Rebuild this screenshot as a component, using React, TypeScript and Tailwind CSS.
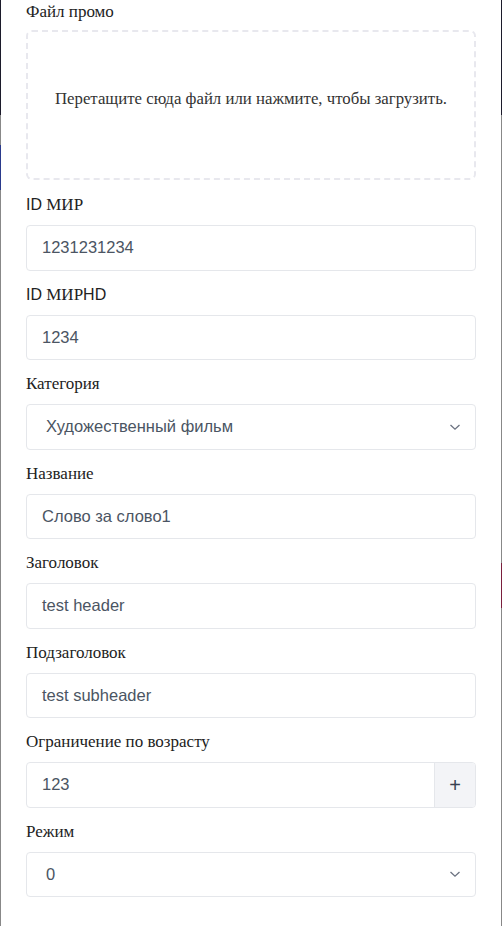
import React from 'react';

const serif = { fontFamily: '"Liberation Serif", "Times New Roman", serif' };

const Label: React.FC<{ children: React.ReactNode }> = ({ children }) => (
  <div className="text-[17px] leading-6 text-[#222222] mb-2" style={serif}>
    {children}
  </div>
);

const Latin: React.FC<{ text: string }> = ({ text }) => (
  <span className="font-['Liberation_Sans',Arial,sans-serif] text-[16px]">{text}</span>
);

const TextInput: React.FC<{ value: string }> = ({ value }) => (
  <div className="h-[45.5px] border border-[#e5e7eb] rounded-[4px] flex items-center px-[15px] text-[16.5px] text-[#4b5563] font-['Liberation_Sans',Arial,sans-serif]">
    {value}
  </div>
);

const Chevron = () => (
  <svg width="12" height="8" viewBox="0 0 12 8" fill="none" stroke="#6b7280" strokeWidth="1.3">
    <path d="M1.5 2 L6 6.2 L10.5 2" />
  </svg>
);

const SelectInput: React.FC<{ value: string }> = ({ value }) => (
  <div className="h-[45.5px] border border-[#e5e7eb] rounded-[4px] flex items-center justify-between pl-[19px] pr-[14px] text-[16.5px] text-[#4b5563] font-['Liberation_Sans',Arial,sans-serif]">
    <span>{value}</span>
    <Chevron />
  </div>
);

export default function App() {
  return (
    <div className="w-[502px] h-[926px] flex bg-[#888888] overflow-hidden">
      <div className="w-px flex flex-col">
        <div className="h-[115px] bg-[#1c1b2b]" />
        <div className="h-[30px] bg-[#888888]" />
        <div className="h-[45px] bg-[#2a3a8c]" />
      </div>
      <div className="w-[500px] bg-white px-[25px] flex flex-col">
        <div className="text-[17px] leading-6 text-[#222222] mb-[6px]" style={serif}>
          Файл промо
        </div>
        <div className="h-[150px] border-2 border-dashed border-[#e8e8ee] rounded-[6px] flex items-center justify-center pb-[12px]">
          <span className="text-[16.8px] text-[#333333]" style={serif}>
            Перетащите сюда файл или нажмите, чтобы загрузить.
          </span>
        </div>
        <div className="mt-[13px]">
          <Label>
            <Latin text="ID" /> МИР
          </Label>
          <TextInput value="1231231234" />
        </div>
        <div className="mt-[12px]">
          <Label>
            <Latin text="ID" /> МИР<Latin text="HD" />
          </Label>
          <TextInput value="1234" />
        </div>
        <div className="mt-[12px]">
          <Label>Категория</Label>
          <SelectInput value="Художественный фильм" />
        </div>
        <div className="mt-[12px]">
          <Label>Название</Label>
          <TextInput value="Слово за слово1" />
        </div>
        <div className="mt-[12px]">
          <Label>Заголовок</Label>
          <TextInput value="test header" />
        </div>
        <div className="mt-[12px]">
          <Label>Подзаголовок</Label>
          <TextInput value="test subheader" />
        </div>
        <div className="mt-[12px]">
          <Label>Ограничение по возрасту</Label>
          <div className="h-[45.5px] border border-[#e5e7eb] rounded-[4px] flex text-[16.5px] text-[#4b5563] font-['Liberation_Sans',Arial,sans-serif] overflow-hidden">
            <div className="flex-1 flex items-center px-[15px]">123</div>
            <div className="w-[41px] border-l border-[#e5e7eb] bg-[#f3f4f7] flex items-center justify-center text-[20px] text-[#374151]">
              +
            </div>
          </div>
        </div>
        <div className="mt-[12px]">
          <Label>Режим</Label>
          <SelectInput value="0" />
        </div>
      </div>
      <div className="w-px flex flex-col">
        <div className="h-[115px] bg-[#1c1b2b]" />
        <div className="h-[448px] bg-[#888888]" />
        <div className="h-[45px] bg-[#7a1f3d]" />
      </div>
    </div>
  );
}
